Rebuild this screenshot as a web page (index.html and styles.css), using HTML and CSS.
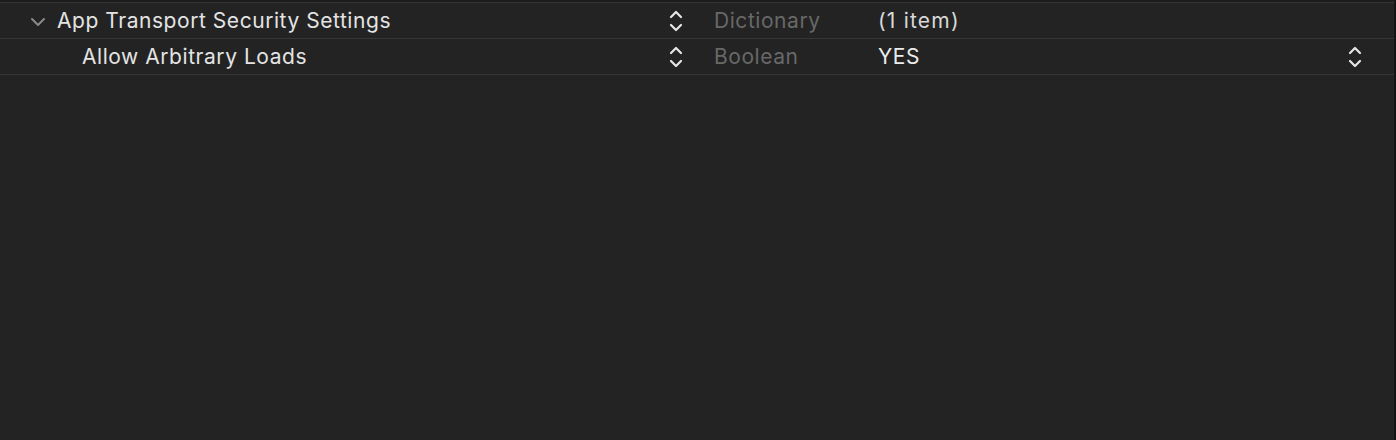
FILE: index.html
```html
<!DOCTYPE html>
<html>
<head>
<meta charset="utf-8">
<link rel="stylesheet" href="styles.css">
</head>
<body>
<div class="editor">
  <div class="row">
    <div class="key">
      <svg class="disclosure" width="16" height="10" viewBox="0 0 16 10"><path d="M2 2 L8 8 L14 2" fill="none" stroke="#8a8a8a" stroke-width="2" stroke-linecap="round" stroke-linejoin="round"/></svg>
      <span class="label">App Transport Security Settings</span>
    </div>
    <div class="stepper"><svg width="16" height="24" viewBox="0 0 16 24"><path d="M3 8 L8 3 L13 8 M3 16 L8 21 L13 16" fill="none" stroke="#e6e6e6" stroke-width="2.2" stroke-linecap="round" stroke-linejoin="round"/></svg></div>
    <div class="type">Dictionary</div>
    <div class="value count">(1 item)</div>
  </div>
  <div class="row">
    <div class="key child">
      <span class="label">Allow Arbitrary Loads</span>
    </div>
    <div class="stepper"><svg width="16" height="24" viewBox="0 0 16 24"><path d="M3 8 L8 3 L13 8 M3 16 L8 21 L13 16" fill="none" stroke="#e6e6e6" stroke-width="2.2" stroke-linecap="round" stroke-linejoin="round"/></svg></div>
    <div class="type">Boolean</div>
    <div class="value strong">YES</div>
    <div class="stepper end"><svg width="16" height="24" viewBox="0 0 16 24"><path d="M3 8 L8 3 L13 8 M3 16 L8 21 L13 16" fill="none" stroke="#e6e6e6" stroke-width="2.2" stroke-linecap="round" stroke-linejoin="round"/></svg></div>
  </div>
</div>
</body>
</html>
```
FILE: styles.css
```css
html, body {
  margin: 0;
  padding: 0;
  background: #232323;
  height: 100%;
}
body {
  font-family: Inter, "Noto Sans", sans-serif;
  color: #e4e4e4;
}
.editor {
  height: 440px;
  box-sizing: border-box;
  border-top: 2px solid #1c1c1c;
  border-right: 2px solid #141414;
  background: #232323;
}
.row {
  display: flex;
  align-items: center;
  height: 35px;
  border-top: 1px solid #363636;
  font-size: 21px;
  letter-spacing: 0.55px;
}
.row:last-child {
  border-bottom: 1px solid #363636;
}
.key {
  width: 660px;
  display: flex;
  align-items: center;
  padding-left: 30px;
  box-sizing: border-box;
}
.key.child {
  padding-left: 82px;
}
.disclosure {
  margin-right: 11px;
  margin-top: 2px;
}
.stepper {
  width: 32px;
  display: flex;
  justify-content: center;
  align-items: center;
}
.stepper svg { display: block; }
.type {
  width: 164px;
  padding-left: 22px;
  color: #686868;
}
.value {
  flex: 1;
  color: #d9d9d9;
}
.value.count {
  letter-spacing: 1.2px;
}
.value.strong {
  color: #ececec;
}
.stepper.end {
  margin-right: 23px;
}
```
